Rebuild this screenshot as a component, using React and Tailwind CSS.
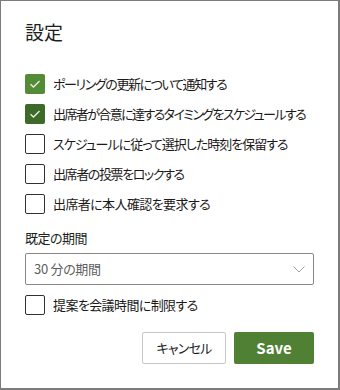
import React from "react";

const jp = "font-['Segoe_UI','Noto_Sans_CJK_JP',sans-serif] [font-feature-settings:'palt']";

function Check({ checked, dark }) {
  if (checked) {
    return (
      <div
        className={`w-5 h-5 rounded-[2px] flex items-center justify-center shrink-0 ${
          dark ? "bg-[#3d6a29]" : "bg-[#538b37]"
        }`}
      >
        <svg width="12" height="10" viewBox="0 0 12 10" fill="none">
          <path d="M1.5 5.2 L4.5 8 L10.5 2" stroke="#e8f0e2" strokeWidth="1.3" />
        </svg>
      </div>
    );
  }
  return <div className="w-5 h-5 rounded-[2px] border border-[#323130] bg-white shrink-0" />;
}

function Row({ label, checked, dark, track }) {
  return (
    <div className="flex items-center gap-2 h-[30px]">
      <Check checked={checked} dark={dark} />
      <span className={`text-[13px] ${track} text-[#1b1a19] leading-5 whitespace-nowrap`}>{label}</span>
    </div>
  );
}

export default function App() {
  return (
    <div
      className={`w-[340px] h-[390px] bg-white border-t border-l border-r-2 border-b-2 border-[#7c7c7c] px-6 pt-[18px] ${jp}`}
    >
      <div className="text-[19px] leading-[26px] text-[#201f1e]">設定</div>
      <div className="mt-6 flex flex-col">
        <Row label="ポーリングの更新について通知する" checked track="tracking-[-1.4px]" />
        <Row label="出席者が合意に達するタイミングをスケジュールする" checked dark track="tracking-[-1.6px]" />
        <Row label="スケジュールに従って選択した時刻を保留する" track="tracking-[-1px]" />
        <Row label="出席者の投票をロックする" track="tracking-[-1.4px]" />
        <Row label="出席者に本人確認を要求する" track="tracking-[-0.6px]" />
      </div>
      <div className="mt-[9px] text-[13px] tracking-[-0.5px] leading-5 text-[#201f1e]">既定の期間</div>
      <div className="mt-[5px] h-8 border border-[#8a8886] rounded-[2px] flex items-center justify-between pl-2 pr-2">
        <span className="text-[13px] tracking-[-0.3px] text-[#605e5c]">30 分の期間</span>
        <svg width="12" height="7" viewBox="0 0 12 7" fill="none">
          <path d="M0.5 0.5 L6 6 L11.5 0.5" stroke="#a19f9d" strokeWidth="1" />
        </svg>
      </div>
      <div className="mt-[5px]">
        <Row label="提案を会議時間に制限する" track="tracking-[-0.6px]" />
      </div>
      <div className="mt-3 flex justify-end gap-2">
        <button className="w-[84px] h-8 border border-[#c8c6c4] rounded-[2px] bg-white text-[13px] tracking-[-0.8px] text-[#201f1e] flex items-center justify-center">
          キャンセル
        </button>
        <button className="w-[80px] h-8 rounded-[2px] bg-[#4f8034] text-white text-[15px] font-bold flex items-center justify-center">
          Save
        </button>
      </div>
    </div>
  );
}
